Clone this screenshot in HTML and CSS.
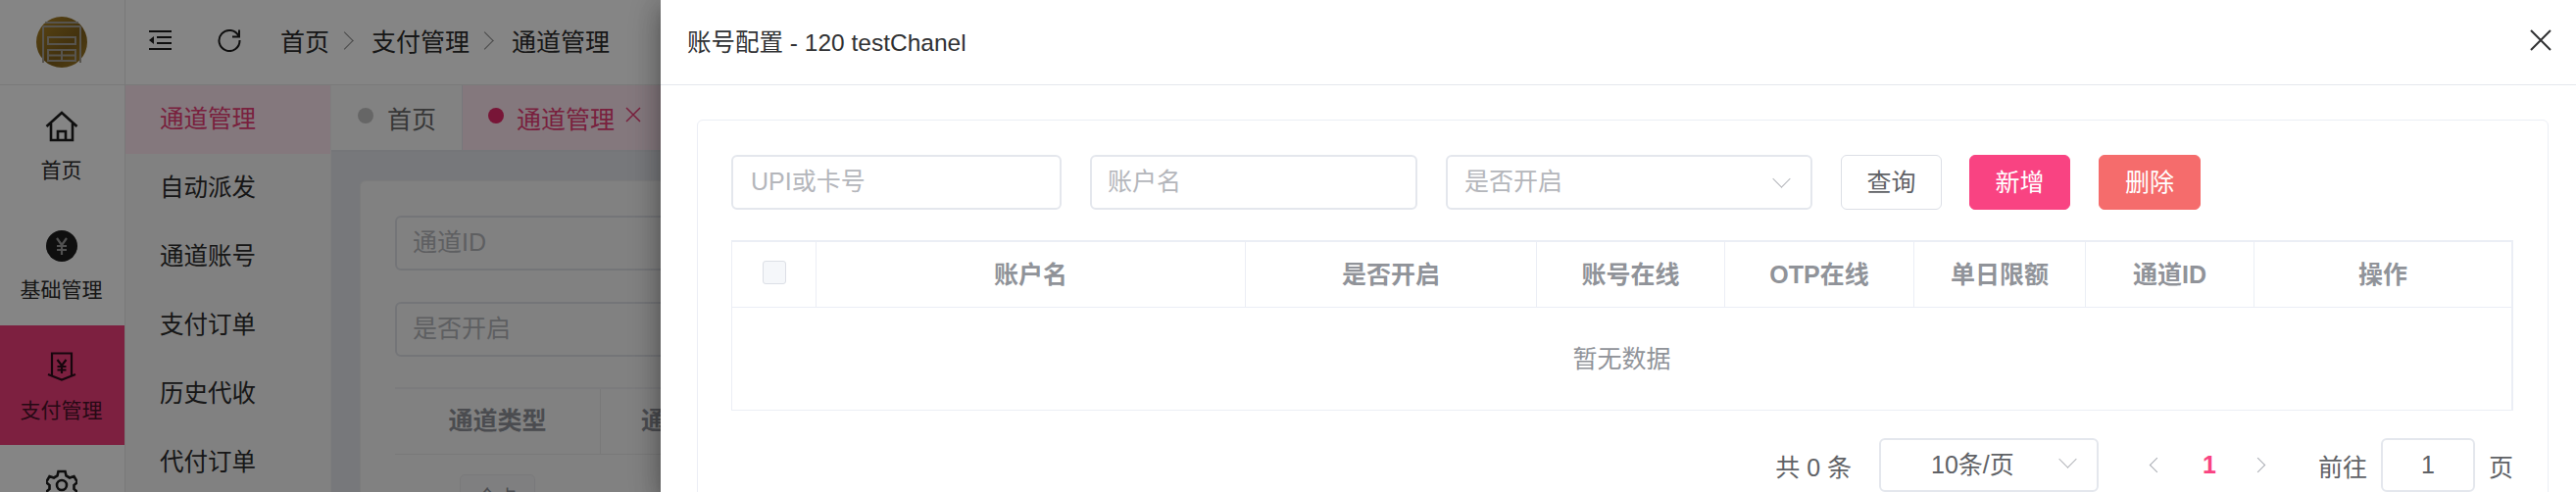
FILE: index.html
```html
<!DOCTYPE html>
<html lang="zh-CN">
<head>
<meta charset="utf-8">
<title>通道管理</title>
<link rel="stylesheet" href="styles.css">
</head>
<body>
<aside class="rail">
    <div class="logo">
        <svg width="52" height="52" viewBox="0 0 52 52">
            <defs>
                <linearGradient id="gold" x1="0" y1="0" x2="1" y2="1">
                    <stop offset="0" stop-color="#ad8426"/>
                    <stop offset="0.6" stop-color="#80601b"/>
                    <stop offset="1" stop-color="#a5802c"/>
                </linearGradient>
            </defs>
            <circle cx="26" cy="26" r="26" fill="url(#gold)"/>
            <g fill="none" stroke="#a8a296" stroke-width="2">
                <path d="M9 6h34M7 10h38M7 10v37M45 10v37"/>
                <rect x="12" y="21" width="28" height="7"/>
                <rect x="12" y="34" width="28" height="11"/>
                <path d="M26 34v11M12 39.500h28"/>
            </g>
        </svg>
    </div>
    <a class="rail-item">
        <svg width="34" height="32" viewBox="0 0 34 32" fill="none" stroke="#1d1d1d" stroke-width="2.600"><path d="M1.500 16 17 2l15.500 14M6 13v17h22V13M13 30v-9h8v9"/></svg>
        <span>首页</span>
    </a>
    <a class="rail-item">
        <svg width="32" height="32" viewBox="0 0 32 32"><circle cx="16" cy="16" r="16" fill="#1d1d1d"/><path d="M11 8l5 7 5-7M16 15v10M11 16h10M11 20h10" fill="none" stroke="#9c9c9c" stroke-width="2.200"/></svg>
        <span>基础管理</span>
    </a>
    <a class="rail-item active">
        <svg width="30" height="30" viewBox="0 0 30 30" fill="none" stroke="#2d0c1a" stroke-width="2.200"><path d="M5 24V1.500h20V24M1 23l14 5.500L29 23"/><path d="M10.500 8l4.500 6 4.500-6M15 14v8M10.500 15h9M10.500 18.500h9"/></svg>
        <span>支付管理</span>
    </a>
    <a class="rail-item">
        <svg width="32" height="32" viewBox="0 0 32 32" fill="none" stroke="#1d1d1d" stroke-width="2.600"><path d="M12.500 2h7l1 4.500 3.500 2 4.500-1.500 3.500 6-3.500 3v4l3.500 3-3.500 6-4.500-1.500-3.500 2-1 4.500h-7l-1-4.500-3.500-2-4.500 1.500-3.500-6 3.500-3v-4l-3.500-3 3.500-6 4.500 1.500 3.500-2z"/><circle cx="16" cy="16" r="5"/></svg>
    </a>
</aside>

<div class="right">
    <header class="topbar">
        <svg class="fold" width="23" height="20" viewBox="0 0 23 20" fill="#1d1d1d"><rect width="23" height="2"/><rect x="8" y="6" width="15" height="2"/><rect x="8" y="12" width="15" height="2"/><rect y="18" width="23" height="2"/><path d="M0 10l5-4v8z"/></svg>
        <svg class="reload" width="24" height="24" viewBox="0 0 24 24" fill="none" stroke="#1d1d1d" stroke-width="2"><path d="M21.500 8A10.500 10.500 0 1 0 22.500 12"/><path d="M22 1.500V8.500h-7"/></svg>
        <nav class="crumbs">
            <span>首页</span><i class="chev"></i><span>支付管理</span><i class="chev"></i><span>通道管理</span>
        </nav>
    </header>
    <div class="workspace">
        <ul class="submenu">
            <li class="active">通道管理</li>
            <li>自动派发</li>
            <li>通道账号</li>
            <li>支付订单</li>
            <li>历史代收</li>
            <li>代付订单</li>
        </ul>
        <div class="content">
            <div class="tabs">
                <div class="tab"><i class="dot"></i>首页</div>
                <div class="tab active"><i class="dot"></i>通道管理<svg class="tab-x" width="16" height="16" viewBox="0 0 16 16" stroke="#e83f77" stroke-width="1.500"><path d="M1 1l14 14M15 1L1 15"/></svg></div>
            </div>
            <div class="panel">
                <div class="panel-card">
                    <div class="fake-input">通道ID</div>
                    <div class="fake-input">是否开启</div>
                    <div class="bg-table">
                        <div class="bg-th first">通道类型</div>
                        <div class="bg-th">通</div>
                    </div>
                    <div class="bg-row"><span class="bg-tag">全卡</span></div>
                </div>
            </div>
        </div>
    </div>
</div>

<div class="overlay"></div>

<section class="drawer">
    <div class="drawer-head">
        <span>账号配置 - 120 testChanel</span>
        <svg width="22" height="22" viewBox="0 0 22 22" stroke="#303133" stroke-width="2"><path d="M1 1l20 20M21 1L1 21"/></svg>
    </div>
    <div class="drawer-body">
        <div class="card">
            <div class="filters">
                <div class="field w337 placeholder">UPI或卡号</div>
                <div class="field w334 placeholder">账户名</div>
                <div class="field w374 placeholder">是否开启<i class="arrow"></i></div>
                <button class="btn">查询</button>
                <button class="btn pink">新增</button>
                <button class="btn coral">删除</button>
            </div>
            <div class="table">
                <div class="thead">
                    <div class="th c0"><i class="check"></i></div>
                    <div class="th c1">账户名</div>
                    <div class="th c2">是否开启</div>
                    <div class="th c3">账号在线</div>
                    <div class="th c4">OTP在线</div>
                    <div class="th c5">单日限额</div>
                    <div class="th c6">通道ID</div>
                    <div class="th c7">操作</div>
                </div>
                <div class="empty">暂无数据</div>
            </div>
            <div class="pager">
                <span class="total">共 0 条</span>
                <div class="field size">10条/页<i class="arrow"></i></div>
                <i class="pg-chev left"></i>
                <span class="pg-num">1</span>
                <i class="pg-chev"></i>
                <span class="goto">前往</span>
                <div class="field jump">1</div>
                <span>页</span>
            </div>
        </div>
    </div>
</section>
</body>
</html>
```

FILE: styles.css
```css
html, body {
    margin: 0;
    padding: 0;
    height: 502px;
    overflow: hidden;
}
body {
    position: relative;
    display: flex;
    width: 2628px;
    background: #fff;
    color: #303133;
    font-family: "Liberation Sans", "Noto Sans CJK SC", sans-serif;
    font-size: 25px;
}

/* left rail */
.rail {
    flex: 0 0 127px;
    border-right: 1px solid #e8e8e8;
    background: #fff;
}
.logo {
    height: 87px;
    margin-bottom: 1px;
    border-bottom: 1px solid #eaeaea;
    box-sizing: border-box;
    display: flex;
    align-items: center;
    justify-content: center;
    padding-right: 2px;
}
.rail-item {
    height: 122px;
    box-sizing: border-box;
    padding: 25px 2px 0 0;
    display: flex;
    flex-direction: column;
    align-items: center;
    font-size: 21px;
    line-height: 24px;
    color: #2c2c2c;
}
.rail-item svg {
    margin-bottom: 17px;
    flex: none;
}
.rail-item.active {
    background: #ef3f7c;
}
.rail-item.active svg {
    margin: 2px 0 18px;
}
.rail-item.active span {
    color: #4a1229;
}

/* top bar */
.right {
    flex: 1;
    min-width: 0;
}
.topbar {
    height: 87px;
    box-sizing: border-box;
    border-bottom: 1px solid #eaeaea;
    display: flex;
    align-items: center;
    padding: 0 0 4px 24px;
    background: #fff;
}
.fold { margin-right: 47px; }
.reload { margin-right: 40px; }
.crumbs {
    display: flex;
    align-items: center;
    color: #2c2c2c;
    white-space: nowrap;
}
.chev {
    width: 13px;
    height: 13px;
    box-sizing: border-box;
    border-top: 1.500px solid #8d8d8d;
    border-right: 1.500px solid #8d8d8d;
    transform: rotate(45deg);
    margin: 0 21px 0 9px;
}

/* second level menu */
.workspace {
    display: flex;
    height: 415px;
}
.submenu {
    flex: 0 0 210px;
    margin: 0;
    padding: 0;
    list-style: none;
    border-right: 1px solid #f1f1f1;
    box-sizing: border-box;
    background: #f7f7f7;
}
.submenu li {
    height: 70px;
    line-height: 70px;
    padding-left: 35px;
    font-size: 24.500px;
    color: #2c2c2c;
}
.submenu li.active {
    background: #fde7ef;
    color: #e83f77;
}

/* page behind the drawer */
.content {
    flex: 1;
    min-width: 0;
}
.tabs {
    display: flex;
    height: 68px;
    border-bottom: 2px solid #e0e3e8;
    box-sizing: border-box;
}
.tab {
    display: flex;
    align-items: center;
    padding: 0 0 0 27px;
    width: 134px;
    box-sizing: border-box;
    color: #6b6b6b;
    white-space: nowrap;
    border-right: 1px solid #e4e7ec;
    background: #f9f9f9;
}
.tab.active {
    width: 300px;
    padding-left: 26px;
    color: #e83f77;
    background: #fde7ef;
    border: 0;
}
.dot {
    width: 16px;
    height: 16px;
    border-radius: 50%;
    background: #c4c4c4;
    margin: -4px 14px 0 0;
}
.tab.active .dot {
    background: #e6296a;
    margin-right: 13px;
}
.tab-x {
    margin: -6px 0 0 11px;
}
.panel {
    height: 347px;
    background: #e4e7eb;
    padding: 29px 0 0 29px;
    box-sizing: border-box;
}
.panel-card {
    height: 330px;
    background: #f8f8f8;
    border: 1px solid #ececec;
    border-radius: 6px 0 0 0;
    padding: 35px 0 0 35px;
    color: #9a9a9a;
    overflow: hidden;
}
.fake-input {
    height: 52px;
    width: 400px;
    line-height: 50px;
    padding-left: 16px;
    border: 2px solid #dfe1e6;
    border-radius: 6px;
    margin-bottom: 32px;
    color: #b4b6bb;
}
.bg-table {
    display: flex;
    height: 68px;
    border-top: 2px solid #ececf0;
    box-sizing: border-box;
    margin-top: -1px;
}
.bg-th {
    line-height: 64px;
    font-weight: bold;
    color: #909399;
}
.bg-th.first {
    width: 210px;
    box-sizing: border-box;
    text-align: center;
    border-right: 1px solid #e8e8e8;
}
.bg-th:not(.first) { padding-left: 41px; }
.bg-row {
    border-top: 1px solid #e8e8e8;
    padding: 20px 0 0 66px;
}
.bg-tag {
    display: inline-block;
    width: 75px;
    height: 46px;
    line-height: 46px;
    text-align: center;
    background: #f4f4f5;
    border: 1px solid #e9e9eb;
    border-radius: 5px;
    font-size: 21px;
    color: #909399;
}

/* dimmer + drawer */
.overlay {
    position: absolute;
    inset: 0;
    background: rgba(0, 0, 0, 0.48);
}
.drawer {
    position: absolute;
    top: 0;
    right: 0;
    bottom: 0;
    width: 1954px;
    background: #fff;
    box-shadow: 0 8px 10px -5px rgba(0,0,0,.2), 0 16px 24px 2px rgba(0,0,0,.14), 0 6px 30px 5px rgba(0,0,0,.12), 0 0 24px rgba(0,0,0,.12);
}
.drawer-head {
    height: 87px;
    box-sizing: border-box;
    border-bottom: 1px solid #e4e7ed;
    display: flex;
    align-items: center;
    justify-content: space-between;
    padding: 0 25px 4px 27px;
    font-size: 24.500px;
    color: #303133;
}
.drawer-body {
    padding: 35px 28px 0 37px;
}
.card {
    height: 400px;
    box-sizing: border-box;
    border: 1px solid #ebeef5;
    border-radius: 6px;
    padding: 35px 35px 0 34px;
}
.filters {
    display: flex;
    gap: 29px;
    align-items: stretch;
    margin-bottom: 31px;
}
.field {
    position: relative;
    height: 56px;
    box-sizing: border-box;
    border: 2px solid #e4e7ed;
    border-radius: 6px;
    line-height: 51px;
    padding-left: 17px;
    color: #606266;
    background: #fff;
}
.placeholder { color: #b4b6bb; }
.w337 { width: 337px; padding-left: 18px; }
.w334 { width: 334px; padding-left: 16px; }
.w374 { width: 374px; }
.arrow {
    position: absolute;
    right: 23px;
    top: 16px;
    width: 12px;
    height: 12px;
    border-right: 1.500px solid #b4b6bb;
    border-bottom: 1.500px solid #b4b6bb;
    transform: rotate(45deg);
}
.btn {
    height: 56px;
    width: 103px;
    box-sizing: border-box;
    border: 1px solid #dcdfe6;
    border-radius: 6px;
    background: #fff;
    color: #606266;
    font: inherit;
    padding: 0 0 5px;
}
.btn.pink {
    margin-left: -1px;
    background: #f94382;
    border-color: #f94382;
    color: #fff;
}
.btn.coral {
    width: 104px;
    background: #f56c6c;
    border-color: #f56c6c;
    color: #fff;
}

/* account table */
.table {
    width: 1818px;
    box-sizing: border-box;
    border: 1px solid #ebeef5;
    border-top: 2px solid #ebeef5;
    border-right-width: 2px;
}
.thead {
    display: flex;
    height: 66px;
    border-bottom: 1px solid #ebeef5;
    box-sizing: content-box;
}
.th {
    display: flex;
    align-items: center;
    justify-content: center;
    box-sizing: border-box;
    border-right: 1px solid #ebeef5;
    color: #909399;
    font-weight: bold;
    padding-bottom: 5px;
}
.th.c7 { border-right: 0; }
.c0 { width: 86px; }
.c1 { width: 438px; }
.c2 { width: 297px; }
.c3 { width: 192px; }
.c4 { width: 193px; }
.c5 { width: 175px; }
.c6 { width: 172px; }
.c7 { flex: 1; }
.check {
    width: 24px;
    height: 24px;
    box-sizing: border-box;
    border: 1px solid #dcdfe6;
    border-radius: 3px;
    background: #f5f7fa;
}
.empty {
    height: 104px;
    line-height: 104px;
    text-align: center;
    color: #909399;
}

/* pagination */
.pager {
    display: flex;
    align-items: center;
    justify-content: flex-end;
    width: 1818px;
    margin-top: 28px;
    color: #606266;
    white-space: nowrap;
}
.total { margin-right: 28px; }
.size {
    width: 224px;
    height: 55px;
    padding-left: 51px;
}
.size .arrow { top: 13px; }
.pg-chev {
    width: 10px;
    height: 10px;
    margin: 0 0 0 37px;
    border-top: 1.500px solid #a8abb2;
    border-right: 1.500px solid #a8abb2;
    transform: rotate(45deg);
}
.pg-chev.left {
    margin: 0 0 0 54px;
    transform: rotate(-135deg);
}
.pg-num {
    margin-left: 41px;
    color: #f94382;
    font-weight: bold;
}
.goto { margin: 0 14px 0 56px; }
.jump {
    width: 96px;
    height: 55px;
    padding: 0;
    text-align: center;
    margin-right: 14px;
}
```
